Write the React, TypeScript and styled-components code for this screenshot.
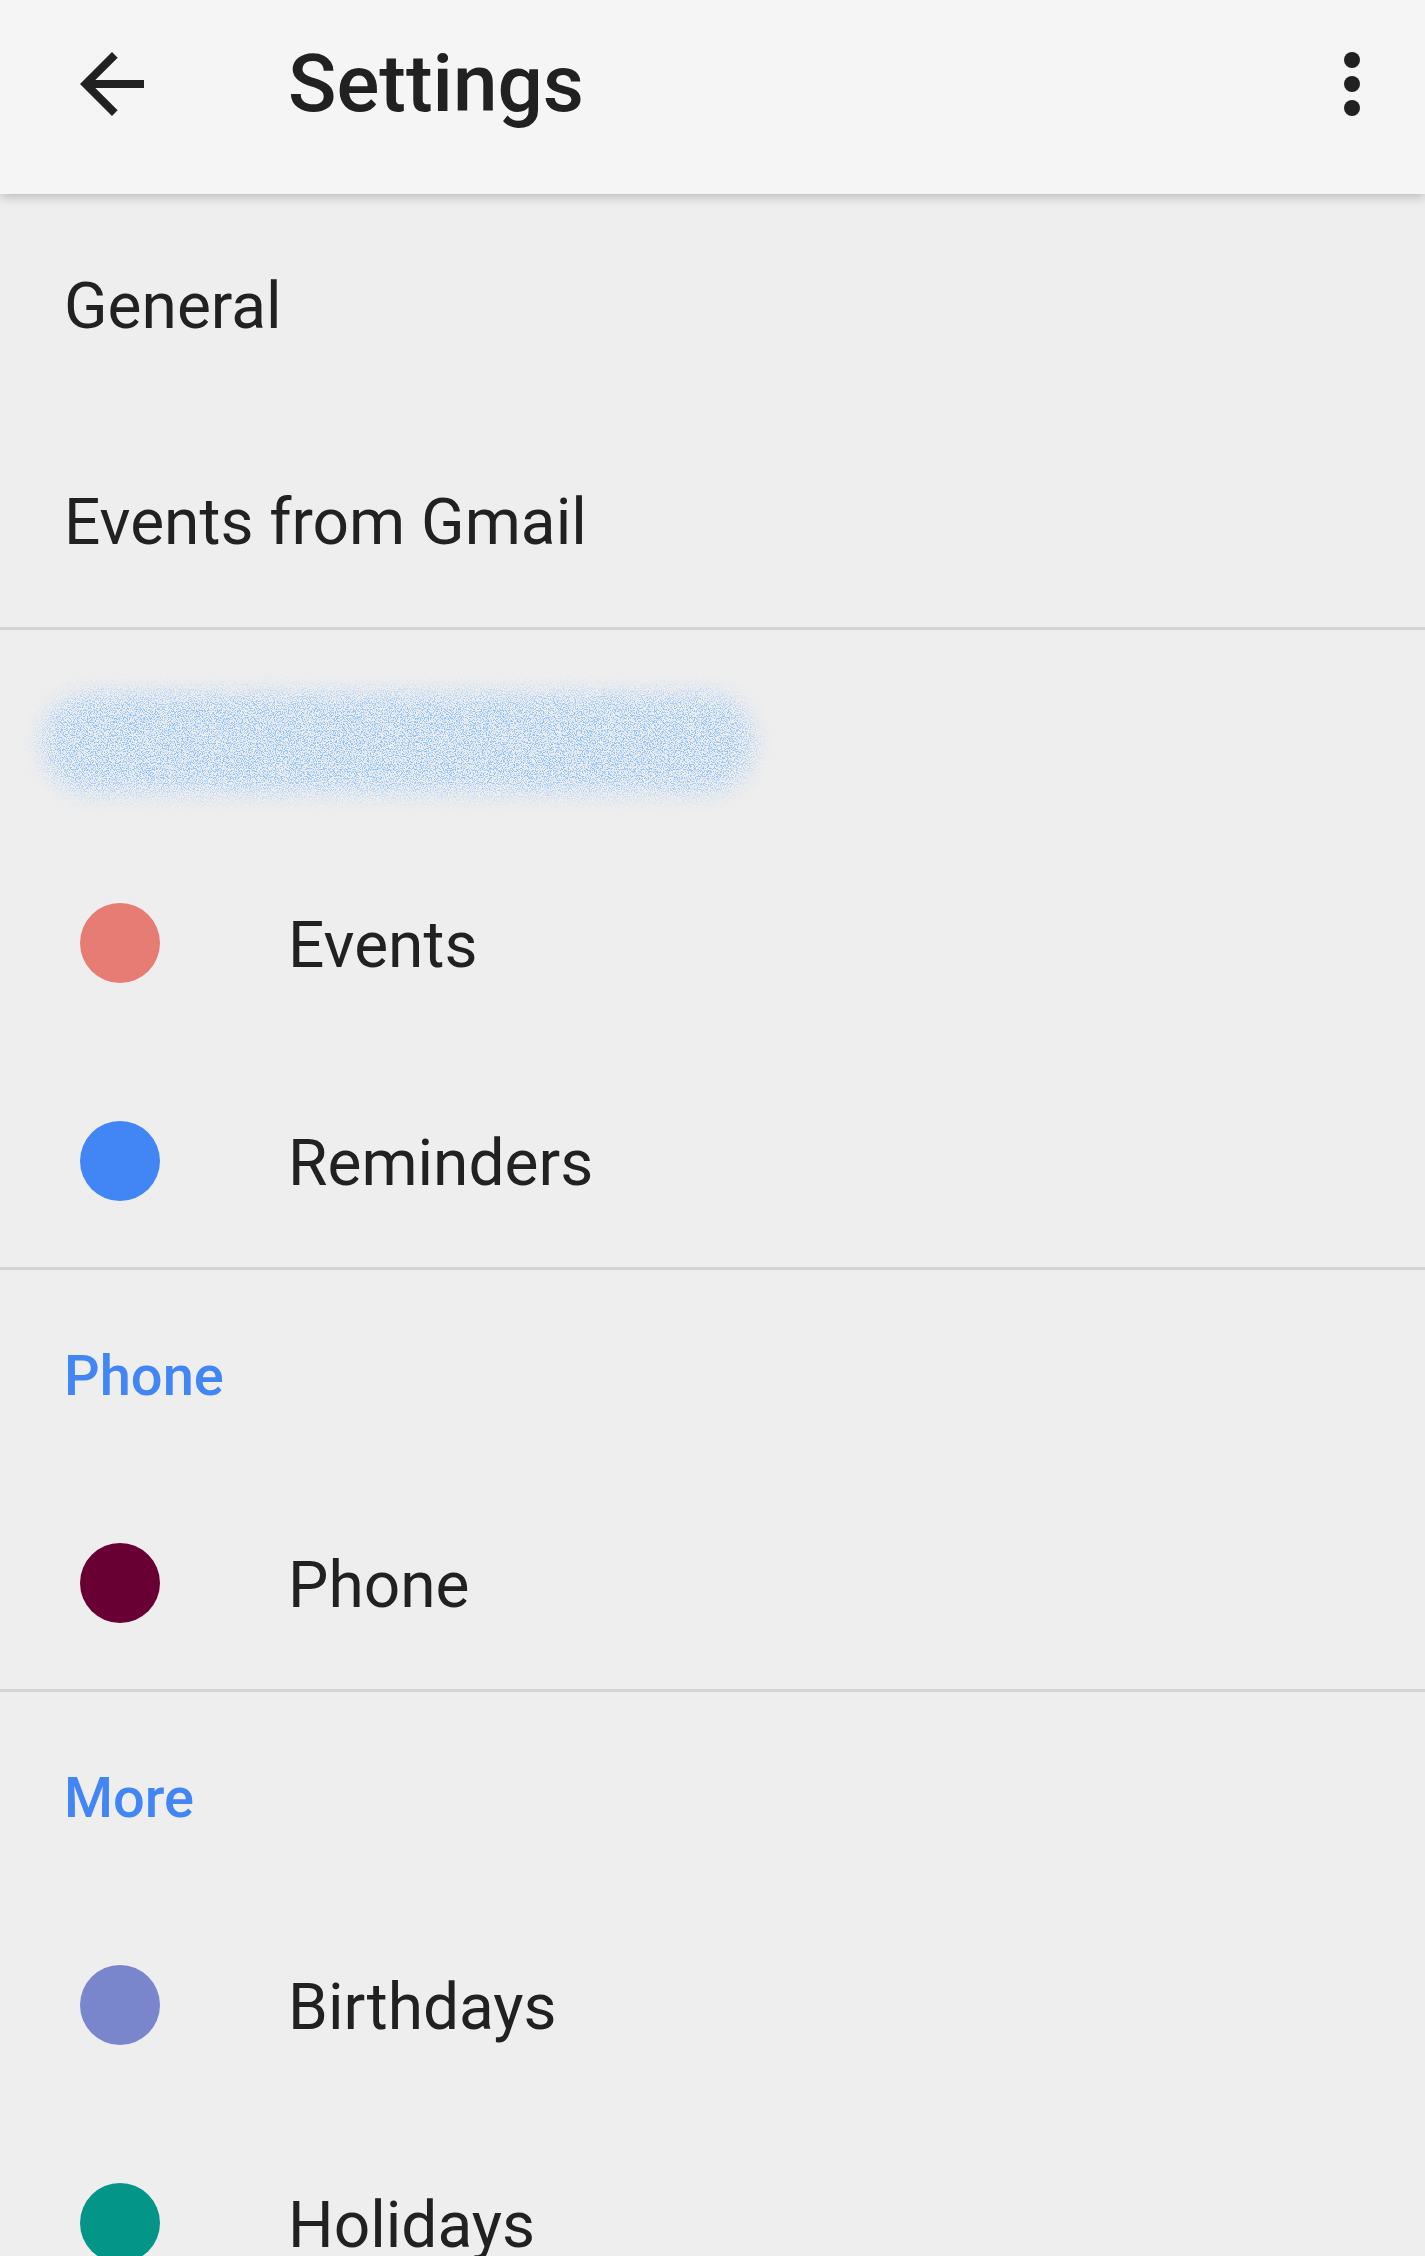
import React from "react";
import styled, { createGlobalStyle } from "styled-components";

/* Styles */
const GlobalStyle = createGlobalStyle`
  html, body {
    margin: 0;
    padding: 0;
    background-color: #eeeeee;
  }

  body {
    font-family: Roboto, "Noto Sans", "Liberation Sans", sans-serif;
    color: #212121;
  }
`;

const Page = styled.div`
  width: 1425px;
  min-height: 2256px;
  overflow: hidden;
  background-color: #eeeeee;
`;

const TopBar = styled.header`
  position: relative;
  z-index: 2;
  display: flex;
  align-items: center;
  height: 194px;
  box-sizing: border-box;
  padding: 0 25px 26px 64px;
  background-color: #f5f5f5;
  box-shadow: 0 3px 10px rgba(0, 0, 0, 0.22);
`;

const IconButton = styled.button`
  display: flex;
  align-items: center;
  justify-content: center;
  width: 96px;
  height: 96px;
  padding: 0;
  border: none;
  background: transparent;
  cursor: pointer;

  & svg {
    display: block;
  }
`;

const Title = styled.h1`
  flex-grow: 1;
  margin: 0 0 0 128px;
  font-size: 80px;
  font-weight: 500;
  line-height: 1;
  color: #212121;
`;

const Section = styled.section<{ $last?: boolean }>`
  display: flex;
  flex-direction: column;
  border-bottom: ${p => (p.$last ? "none" : "3px solid #d3d3d3")};
`;

const FirstSection = styled(Section)`
  padding-bottom: 1px;
`;

const PlainRow = styled.div`
  display: flex;
  align-items: center;
  height: 216px;
  box-sizing: border-box;
  padding: 9px 0 0 64px;
  font-size: 64px;
  line-height: 1;
`;

const SectionHeader = styled.div`
  display: flex;
  align-items: center;
  height: 201px;
  box-sizing: border-box;
  padding: 10px 0 0 64px;
  font-size: 56px;
  font-weight: 500;
  line-height: 1;
  color: #4285f4;
`;

const AccountHeader = styled(SectionHeader)`
  padding-left: 6px;
  padding-top: 22px;

  & svg {
    display: block;
  }
`;

const CalendarRow = styled.div`
  display: flex;
  align-items: center;
  height: 218px;
  box-sizing: border-box;
  padding: 6px 0 0 80px;
  font-size: 64px;
  line-height: 1;
`;

const Swatch = styled.span<{ $color: string }>`
  flex-shrink: 0;
  width: 80px;
  height: 80px;
  border-radius: 50%;
  background-color: ${p => p.$color};
`;

const RowLabel = styled.span`
  margin-left: 128px;
  padding-top: 5px;
`;

/* Icons */
const BackArrow = () => (
  <svg width="96" height="96" viewBox="0 0 24 24">
    <path fill="#212121" d="M20 11H7.83l5.59-5.59L12 4l-8 8 8 8 1.41-1.41L7.83 13H20v-2z" />
  </svg>
);

const MoreVert = () => (
  <svg width="96" height="96" viewBox="0 0 24 24">
    <circle cx="12" cy="6" r="2" fill="#212121" />
    <circle cx="12" cy="12" r="2" fill="#212121" />
    <circle cx="12" cy="18" r="2" fill="#212121" />
  </svg>
);

// speckled blue smudge over the hidden account name
const RedactedSmudge = () => (
  <svg width="780" height="150" viewBox="0 0 780 150">
    <defs>
      <filter id="speck" x="0" y="0" width="100%" height="100%">
        <feTurbulence type="fractalNoise" baseFrequency="0.85" numOctaves="2" seed="7" result="noise" />
        <feColorMatrix
          in="noise"
          type="matrix"
          values="0 0 0 0 0.27  0 0 0 0 0.53  0 0 0 0 0.96  6 0 0 0 -2.8"
        />
      </filter>
      <filter id="soft" x="-10%" y="-50%" width="120%" height="200%">
        <feGaussianBlur stdDeviation="11" />
      </filter>
      <mask id="smudgeMask">
        <rect x="36" y="26" width="712" height="100" rx="50" fill="#fff" filter="url(#soft)" />
      </mask>
    </defs>
    <rect x="0" y="0" width="780" height="150" filter="url(#speck)" mask="url(#smudgeMask)" />
  </svg>
);

interface ICalendar {
  name: string;
  color: string;
}

const accountCalendars: ICalendar[] = [
  { name: "Events", color: "#e67c73" },
  { name: "Reminders", color: "#4285f4" },
];

const phoneCalendars: ICalendar[] = [{ name: "Phone", color: "#680034" }];

const moreCalendars: ICalendar[] = [
  { name: "Birthdays", color: "#7986cb" },
  { name: "Holidays", color: "#039587" },
];

const CalendarList = ({ items }: { items: ICalendar[] }) => (
  <>
    {items.map(c => (
      <CalendarRow key={c.name}>
        <Swatch $color={c.color} />
        <RowLabel>{c.name}</RowLabel>
      </CalendarRow>
    ))}
  </>
);

/* Main Component */
export default function App() {
  return (
    <Page>
      <GlobalStyle />
      <TopBar>
        <IconButton aria-label="Back">
          <BackArrow />
        </IconButton>
        <Title>Settings</Title>
        <IconButton aria-label="More options">
          <MoreVert />
        </IconButton>
      </TopBar>

      <FirstSection>
        <PlainRow>General</PlainRow>
        <PlainRow>Events from Gmail</PlainRow>
      </FirstSection>

      <Section>
        <AccountHeader>
          <RedactedSmudge />
        </AccountHeader>
        <CalendarList items={accountCalendars} />
      </Section>

      <Section>
        <SectionHeader>Phone</SectionHeader>
        <CalendarList items={phoneCalendars} />
      </Section>

      <Section $last>
        <SectionHeader>More</SectionHeader>
        <CalendarList items={moreCalendars} />
      </Section>
    </Page>
  );
}
